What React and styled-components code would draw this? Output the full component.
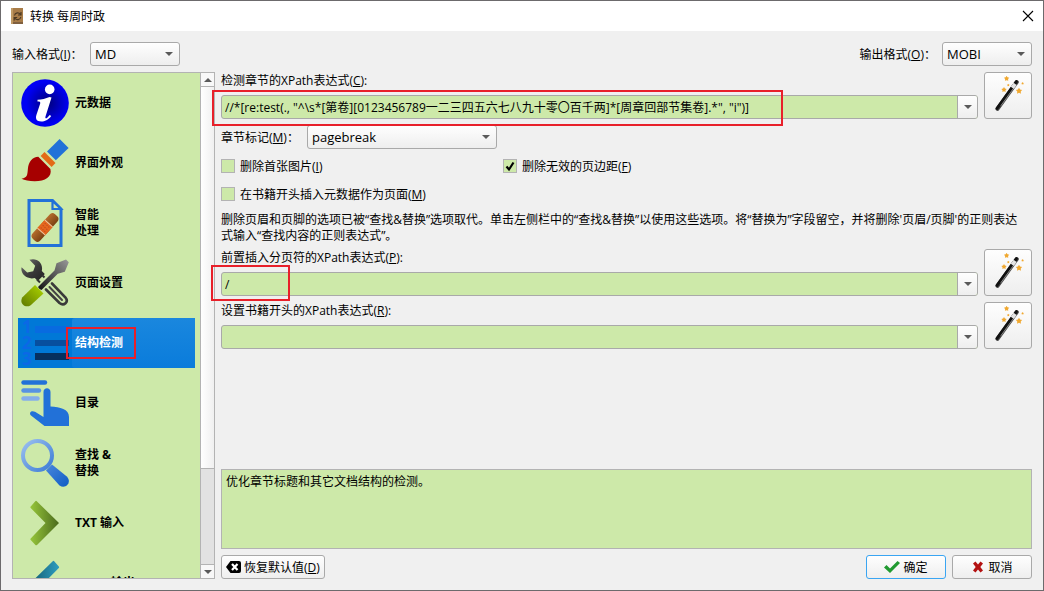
import React from 'react';
import styled, { createGlobalStyle, css } from 'styled-components';

const GREEN = '#cde9a9';
const EDGE = '#b3b3b3';

const GlobalStyle = createGlobalStyle`
  *, *::before, *::after { box-sizing: border-box; }
  body { margin: 0; }
  body, button, input, select, textarea {
    font-family: "Open Sans", "Noto Sans CJK SC", sans-serif;
    font-size: 12px;
    line-height: 16px;
    color: #000;
  }
  svg { display: block; flex: none; }
`;

const Dialog = styled.main`
  display: flex;
  flex-direction: column;
  height: 100vh;
  min-height: 480px;
  overflow: hidden;
  background: #f0f0f0;
  border: 1px solid #6c6a6c;
`;

/* Optical centring: CJK glyphs sit high in the line box. */
const centred = css`
  margin: 1px 0 -1px;
`;

const TitleBar = styled.header`
  display: flex;
  align-items: center;
  gap: 5px;
  height: 30px;
  flex: none;
  padding: 0 7px 0 8px;
  background: #fff;
`;

const Title = styled.h1`
  ${centred}
  flex: 1;
  font-size: 12px;
  font-weight: 400;
`;

const CloseButton = styled.button`
  display: flex;
  padding: 0;
  border: 0;
  background: none;
`;

const Body = styled.div`
  flex: 1;
  min-height: 0;
  display: flex;
  flex-direction: column;
  gap: 6px;
  padding: 11px;
`;

const Row = styled.div`
  display: flex;
  align-items: center;
  justify-content: ${(p) => (p.$spread ? 'space-between' : 'flex-start')};
  gap: 6px;
  flex: none;
`;

const Label = styled.label`
  ${centred}
  white-space: nowrap;
  min-width: ${(p) => (p.$wide ? '80px' : '72px')};
`;

const Caption = styled.span`
  ${centred}
`;

const SelectBox = styled.div`
  position: relative;
  width: ${(p) => (p.$wide ? '190px' : '90px')};
`;

const raised = css`
  border: 1px solid #a9a9a9;
  border-radius: 3px;
  background: linear-gradient(#fefefe, #eeeeee);
`;

const Select = styled.select`
  ${raised}
  appearance: none;
  display: block;
  width: 100%;
  height: 24px;
  padding: 0 20px 0 4px;
  font-size: 13px;
`;

const SelectArrow = styled.span`
  position: absolute;
  right: 7px;
  top: 10px;
  pointer-events: none;
`;

const Columns = styled.div`
  flex: 1;
  min-height: 0;
  display: flex;
  gap: 6px;
`;

const Sidebar = styled.div`
  display: flex;
  flex: none;
  width: 203px;
  border: 1px solid ${EDGE};
  background: ${GREEN};
`;

const NavList = styled.nav`
  flex: 1;
  min-width: 0;
  display: flex;
  flex-direction: column;
  gap: 10px;
  padding: 5px;
  overflow: hidden;
`;

const NavItem = styled.button`
  position: relative;
  display: flex;
  align-items: center;
  flex: none;
  height: 50px;
  padding: 0 0 0 3px;
  border: 0;
  text-align: left;
  font-weight: 700;
  white-space: pre-line;
  color: ${(p) => (p.$selected ? '#fff' : '#000')};
  background: ${(p) => (p.$selected ? '#0078d7' : 'transparent')};
`;

const NavText = styled.span`
  display: flex;
  align-items: center;
  flex: 1;
  align-self: stretch;
  margin-left: 3px;
  padding-left: 3px;
  border-radius: 3px 0 0 3px;
  background: ${(p) => (p.$selected ? 'linear-gradient(#1a87de, #0a7cdb)' : 'none')};
`;

const ScrollBar = styled.div`
  display: flex;
  flex-direction: column;
  width: 14px;
  border-left: 1px solid ${EDGE};
  background: #e2e2e2;
`;

const ScrollButton = styled.button`
  display: flex;
  align-items: center;
  justify-content: center;
  height: 14px;
  flex: none;
  padding: 0;
  border: 0 solid ${EDGE};
  border-width: ${(p) => (p.$end ? '1px 0 0' : '0 0 1px')};
  background: #f8f8f8;
`;

const ScrollThumb = styled.div`
  flex: 4;
  border-bottom: 1px solid ${EDGE};
  background: linear-gradient(90deg, #fff, #f0f0f0);
`;

const ScrollTrack = styled.div`
  flex: 1;
`;

const Panel = styled.section`
  flex: 1;
  min-width: 0;
  display: flex;
  flex-direction: column;
  gap: 6px;
`;

const Field = styled.div`
  display: flex;
  gap: 6px;
  flex: none;
`;

const FieldMain = styled.div`
  flex: 1;
  min-width: 0;
  display: flex;
  flex-direction: column;
  justify-content: space-between;
`;

const Combo = styled.div`
  position: relative;
  display: flex;
  height: 24px;
  border: 1px solid #a9a9a9;
  border-radius: 3px;
  background: ${GREEN};
`;

const ComboInput = styled.input`
  flex: 1;
  min-width: 0;
  padding: 2px 3px 0;
  border: 0;
  background: transparent;
`;

const ComboButton = styled.button`
  display: flex;
  align-items: center;
  justify-content: center;
  width: 20px;
  padding: 0;
  border: 0;
  border-left: 1px solid #a9a9a9;
  border-radius: 0 2px 2px 0;
  background: linear-gradient(#fefefe, #eeeeee);
`;

const WizardButton = styled.button`
  ${raised}
  display: flex;
  align-items: center;
  justify-content: center;
  width: 48px;
  height: 47px;
  padding: 0;
`;

const MARKS = {
  nav: css`left: 48px; top: 9px; width: 70px; height: 32px;`,
  long: css`left: -10px; top: -6px; width: 571px; height: 36px;`,
  short: css`left: -11px; top: -8px; width: 79px; height: 36px;`,
};

const Mark = styled.span`
  position: absolute;
  z-index: 1;
  border: 2px solid #e8202a;
  pointer-events: none;
  ${(p) => MARKS[p.$on]}
`;

const Checks = styled.div`
  display: grid;
  grid-template-columns: 276px 1fr;
  gap: 6px;
  flex: none;
`;

const CheckLabel = styled.label`
  display: flex;
  align-items: center;
  gap: 5px;
  height: 22px;
  white-space: nowrap;
`;

const CheckBox = styled.span`
  display: grid;
  width: 14px;
  height: 14px;

  > * { grid-area: 1 / 1; }
  svg { visibility: hidden; pointer-events: none; }
  input:checked + svg { visibility: visible; }
`;

const CheckInput = styled.input`
  appearance: none;
  width: 14px;
  height: 14px;
  margin: 0;
  border: 1px solid ${EDGE};
  background: ${GREEN};
`;

const Note = styled.p`
  ${centred}
  flex: none;
  padding-right: 6px;
`;

const Help = styled.textarea`
  display: block;
  width: 100%;
  height: 80px;
  flex: none;
  margin-top: auto;
  padding: 4px;
  border: 1px solid ${EDGE};
  background: ${GREEN};
  resize: none;
`;

const Button = styled.button`
  ${raised}
  display: flex;
  align-items: center;
  justify-content: center;
  gap: 3px;
  height: 24px;
  min-width: 80px;
  padding: 0 4px;
  border-color: ${(p) => (p.$primary ? '#3aa5f2' : '#a9a9a9')};
`;

const Arrow = ({ up }) => (
  <svg width="8" height="4" viewBox="0 0 8 4" aria-hidden="true">
    <path d={up ? 'M0 4 4 0 8 4z' : 'M0 0H8L4 4z'} fill="#5a5a5a" />
  </svg>
);

const star = (x, y, r) => {
  const pts = [];
  for (let i = 0; i < 10; i++) {
    const rad = i % 2 ? r * 0.55 : r;
    const a = -Math.PI / 2 + (i * Math.PI) / 5;
    pts.push(`${x + rad * Math.cos(a)},${y + rad * Math.sin(a)}`);
  }
  return <polygon points={pts.join(' ')} fill="#f0a830" />;
};

const Wand = () => (
  <svg width="40" height="40" viewBox="0 0 40 40" aria-hidden="true">
    <g strokeLinecap="round">
      <path d="M9.500 32.800 28.800 6" stroke="#444" strokeWidth="4" />
      <path d="M9 32.400 28.400 5.600" stroke="#111" strokeWidth="2.800" />
      <path d="m13 29.500 12-16.500" stroke="#999" strokeWidth="0.800" />
    </g>
    <path d="m24.300 11.800 2.800-3.900" stroke="#e4e4e4" strokeWidth="3.800" />
    {star(18.600, 2.600, 2.800)}
    {star(16, 13.800, 2.800)}
    {star(31, 15, 3.300)}
    {star(20.300, 9.200, 1.400)}
    {star(34.600, 7.400, 1.400)}
  </svg>
);

const Icon = ({ children }) => (
  <svg width="48" height="48" viewBox="0 0 48 48" aria-hidden="true">{children}</svg>
);

const InfoIcon = () => (
  <Icon>
    <defs>
      <radialGradient id="info" cx=".55" cy=".5" r=".5">
        <stop offset="0" stopColor="#00007a" />
        <stop offset=".9" stopColor="#0000f4" />
      </radialGradient>
    </defs>
    <circle cx="24" cy="24" r="23.800" fill="url(#info)" />
    <circle cx="28.700" cy="10.400" r="4.800" fill="#fff" />
    <path d="M16.500 20.800c4.300-.3 8.200-1.200 12-2.800l2 .6-6 19c-.6 2 .6 2.300 2 .9l2.200-2.400 1.500 1c-3 4.300-6.800 5.600-10 5.500-4.600 0-6-2.800-4.800-6.500l3.800-11.600c.5-1.600-.7-1.900-2.700-1.900z" fill="#fff" />
  </Icon>
);

const BrushIcon = () => (
  <Icon>
    <path d="M38.600 0 47.600 9 34.800 21.200 26 12.500z" fill="#2271d8" />
    <path d="m23.500 13 11 11-3.900 4.100-11-11z" fill="#e36a17" />
    <path d="M17.300 17.800 29.400 30c2 7.800-5.200 12.200-15.700 12.200-5.600 0-10.200-1-13.200-2.500 6-1.300 5.800-3.600 6.400-10C7.500 23 11.400 18 17.300 17.800z" fill="#a60000" />
  </Icon>
);

const BandageIcon = () => (
  <Icon>
    <defs>
      <linearGradient id="bandage" x1="0" x2="1">
        <stop offset="0" stopColor="#b56c2c" /><stop offset="1" stopColor="#7c4214" />
      </linearGradient>
    </defs>
    <path d="M8 1.500H31.500L40 10V46.500H8z" fill="none" stroke="#2271d8" strokeWidth="3" />
    <path d="M31.500 2v8H40z" fill="#cde9a9" stroke="#2271d8" strokeWidth="2.200" />
    <g transform="rotate(42 24 28.500)">
      <rect x="18.700" y="12" width="10.600" height="33" rx="4" fill="url(#bandage)" />
      <path d="M18.700 23H29.300V34H18.700z" fill="#e4671d" />
      <path d="M18.700 23H29.300M18.700 34H29.300" stroke="#f0c8a0" strokeWidth="1" />
      <path d="M21.500 25v8M24 25v8M26.500 25v8" stroke="#b83d20" strokeDasharray="1 2" />
    </g>
  </Icon>
);

const ToolsIcon = () => (
  <Icon>
    <defs>
      <linearGradient id="steel" x1="0" y1="0" x2="1" y2="1">
        <stop offset="0" stopColor="#777" /><stop offset=".5" stopColor="#3a3a3a" /><stop offset="1" stopColor="#222" />
      </linearGradient>
      <linearGradient id="grip" x1="0" y1="1" x2="1" y2="0">
        <stop offset="0" stopColor="#5e7800" /><stop offset="1" stopColor="#b0d800" />
      </linearGradient>
      <linearGradient id="blade" x1="0" y1="1" x2="1" y2="0">
        <stop offset="0" stopColor="#111" /><stop offset="1" stopColor="#999" />
      </linearGradient>
    </defs>
    <path d="M8.500.8C16-1.600 22.500 4 20.800 12l3 3-7 7-3-3C6.300 21-1 15 .6 8.200l5.600 5.300 6-1.300 2-5.400z" fill="url(#steel)" />
    <path d="m16 20.500 3 3M21 16l2.500 2.500" stroke="#333" strokeWidth="2" />
    <path d="M31 24.500 44.500 38.500c3.500 4.500-1.500 9-6 5.500L25 30.500" fill="none" stroke="#3a3a3a" strokeWidth="2.600" strokeLinecap="round" />
    <path d="M28.500 28 41 41" stroke="#444" strokeWidth="2" strokeLinecap="round" />
    <path d="M18.500 30 17 28 33.500 11.500l2-7.300L45 .5l2.800 2.800-4 9.500-7 2L20.500 31z" fill="url(#blade)" />
    <path d="m14 26 8.500 8.600L9.700 46.200C4.500 49.800-2 44.500 1.200 38.500z" fill="url(#grip)" />
  </Icon>
);

const StructureIcon = () => (
  <Icon>
    <g fill="#0c68e6" fontFamily="Open Sans" fontWeight="700" fontSize="17">
      <text x="1" y="14">1</text>
      <text x="1" y="30">2</text>
      <text x="1" y="46">3</text>
    </g>
    <path d="M14 7H48v7H14z" fill="#086be0" />
    <path d="M14 21H48v6H14z" fill="#074f9f" />
    <path d="M14 34H48v7H14z" fill="#06305f" />
  </Icon>
);

const TocIcon = () => (
  <Icon>
    <g strokeWidth="4.400" strokeLinecap="round">
      <path d="M2.500 3.500H24" stroke="#2271d8" />
      <path d="M2.500 11.500H18" stroke="#5793e2" />
      <path d="M2.500 19.500H16.500" stroke="#85aeea" />
    </g>
    <path d="M22.500 38V13c0-5 7-5 7 0v14.500c9.500.8 18.500 2.500 18.500 10.500v9H23.500L10 36.500c-2.500-3 .5-5.500 4-3.800z" fill="#2271d8" />
  </Icon>
);

const SearchIcon = () => (
  <Icon>
    <defs>
      <linearGradient id="lens" x1="0" y1="0" x2="1" y2="1">
        <stop offset="0" stopColor="#9bc0ef" /><stop offset="1" stopColor="#3c7cd6" />
      </linearGradient>
      <linearGradient id="handle" x1="0" y1="0" x2="1" y2="1">
        <stop offset="0" stopColor="#4a87dc" /><stop offset="1" stopColor="#0e5cc4" />
      </linearGradient>
    </defs>
    <path d="m31 25.500 14.500 11.700c6 5.500-.5 13.500-7 9.300L25 31.500z" fill="url(#handle)" />
    <circle cx="16.500" cy="16.500" r="14.500" fill="none" stroke="url(#lens)" strokeWidth="4" />
  </Icon>
);

const RightIcon = () => (
  <Icon>
    <defs>
      <linearGradient id="chevron"><stop offset="0" stopColor="#96c53a" /><stop offset="1" stopColor="#4a6a1d" /></linearGradient>
    </defs>
    <path d="M15.500 2 38 24 16 46q-1 .6-1.600 0l-4.700-5q-.6-1 0-1.500L24.500 24 9.700 9q-.6-1 0-1.500l4.600-5.300q.6-.7 1.200-.2z" fill="url(#chevron)" />
  </Icon>
);

const LeftIcon = () => (
  <Icon>
    <defs>
      <linearGradient id="back"><stop offset="0" stopColor="#145c70" /><stop offset="1" stopColor="#2d9dc0" /></linearGradient>
    </defs>
    <path d="M32 2 9.500 24 31.500 46q1 .6 1.600 0l4.700-5q.6-1 0-1.500L23 24 37.800 9q.6-1 0-1.500l-4.600-5.300q-.6-.7-1.200-.2z" fill="url(#back)" />
  </Icon>
);

const NAV = [
  ['元数据', InfoIcon],
  ['界面外观', BrushIcon],
  ['智能\n处理', BandageIcon],
  ['页面设置', ToolsIcon],
  ['结构检测', StructureIcon],
  ['目录', TocIcon],
  ['查找 &\n替换', SearchIcon],
  ['TXT 输入', RightIcon],
  ['MOBI 输出', LeftIcon],
];

const DropDown = ({ id, value, wide }) => (
  <SelectBox $wide={wide}>
    <Select id={id} defaultValue={value}>
      <option>{value}</option>
    </Select>
    <SelectArrow><Arrow /></SelectArrow>
  </SelectBox>
);

const XPathField = ({ id, label, hotkey, value, mark }) => (
  <Field>
    <FieldMain>
      <Label htmlFor={id}>{label}(<u>{hotkey}</u>):</Label>
      <Combo>
        <ComboInput id={id} type="text" defaultValue={value} />
        <ComboButton type="button" aria-label="历史记录"><Arrow /></ComboButton>
        {mark && <Mark $on={mark} />}
      </Combo>
    </FieldMain>
    <WizardButton type="button" aria-label="XPath 向导"><Wand /></WizardButton>
  </Field>
);

const Check = ({ label, hotkey, checked }) => (
  <CheckLabel>
    <CheckBox>
      <CheckInput type="checkbox" defaultChecked={checked} />
      <svg width="14" height="14" viewBox="0 0 14 14" aria-hidden="true">
        <path d="M3.500 7.500 6 10.500 10.500 3.500" fill="none" stroke="#000" strokeWidth="2.200" />
      </svg>
    </CheckBox>
    <Caption>{label}(<u>{hotkey}</u>)</Caption>
  </CheckLabel>
);

export default function App() {
  return (
    <Dialog lang="zh-CN">
      <GlobalStyle />
      <TitleBar>
        <svg width="16" height="16" viewBox="0 0 16 16" aria-hidden="true">
          <path d="M2 0H14V16H2z" fill="#a87c48" />
          <path d="M2 0H4V16H2z" fill="#c09a64" />
          <path d="M4 14H14V16H4z" fill="#806040" />
          <path d="M5.500 7.500C6 4.500 10 4 11.500 6.500M12 4v3H9M11.800 9c-.5 3-4.500 3.500-6 1M5.200 12.500v-3h3" fill="none" stroke="#4c3923" strokeWidth="1.200" />
        </svg>
        <Title>转换 每周时政</Title>
        <CloseButton type="button" aria-label="关闭">
          <svg width="16" height="16" viewBox="0 0 16 16"><path d="m3 3 10 10M13 3 3 13" stroke="#000" strokeWidth="1.100" /></svg>
        </CloseButton>
      </TitleBar>
      <Body>
        <Row $spread>
          <Row>
            <Label htmlFor="in">输入格式(<u>I</u>)：</Label>
            <DropDown id="in" value="MD" />
          </Row>
          <Row>
            <Label htmlFor="out">输出格式(<u>O</u>)：</Label>
            <DropDown id="out" value="MOBI" />
          </Row>
        </Row>
        <Columns>
          <Sidebar>
            <NavList>
              {NAV.map(([text, Picture]) => {
                const selected = text === '结构检测';
                return (
                  <NavItem key={text} type="button" $selected={selected}>
                    <Picture />
                    <NavText $selected={selected}>{text}</NavText>
                    {selected && <Mark $on="nav" />}
                  </NavItem>
                );
              })}
            </NavList>
            <ScrollBar>
              <ScrollButton type="button" aria-label="向上"><Arrow up /></ScrollButton>
              <ScrollThumb />
              <ScrollTrack />
              <ScrollButton type="button" aria-label="向下" $end><Arrow /></ScrollButton>
            </ScrollBar>
          </Sidebar>
          <Panel>
            <XPathField
              id="chapter"
              label="检测章节的XPath表达式"
              hotkey="C"
              value={'//*[re:test(., "^\\s*[第卷][0123456789一二三四五六七八九十零〇百千两]*[周章回部节集卷].*", "i")]'}
              mark="long"
            />
            <Row>
              <Label $wide htmlFor="mark">章节标记(<u>M</u>)：</Label>
              <DropDown id="mark" value="pagebreak" wide />
            </Row>
            <Checks>
              <Check label="删除首张图片" hotkey="I" />
              <Check label="删除无效的页边距" hotkey="F" checked />
              <Check label="在书籍开头插入元数据作为页面" hotkey="M" />
            </Checks>
            <Note>
              删除页眉和页脚的选项已被“查找&amp;替换”选项取代。单击左侧栏中的“查找&amp;替换”以使用这些选项。将“替换为”字段留空，并将删除'页眉/页脚'的正则表达式输入“查找内容的正则表达式”。
            </Note>
            <XPathField id="breaks" label="前置插入分页符的XPath表达式" hotkey="P" value="/" mark="short" />
            <XPathField id="start" label="设置书籍开头的XPath表达式" hotkey="R" value="" />
            <Help readOnly aria-label="说明" defaultValue="优化章节标题和其它文档结构的检测。" />
            <Row $spread>
              <Button type="button">
                <svg width="15" height="12" viewBox="0 0 15 12" aria-hidden="true">
                  <path d="M4.500 0H13q2 0 2 2v8q0 2-2 2H4.500L0 6z" fill="#000" />
                  <path d="m6 3 5.500 6M11.500 3 6 9" stroke="#fff" strokeWidth="2.200" />
                </svg>
                <Caption>恢复默认值(<u>D</u>)</Caption>
              </Button>
              <Row>
                <Button type="button" $primary>
                  <svg width="16" height="14" viewBox="0 0 16 14" aria-hidden="true">
                    <path d="M0 7.500 2.500 5 6 8.500 13.500 1 16 3 6 13z" fill="#219a31" />
                  </svg>
                  <Caption>确定</Caption>
                </Button>
                <Button type="button">
                  <svg width="14" height="14" viewBox="0 0 14 14" aria-hidden="true">
                    <path d="M2 3.500 4.500 1.500 7 4.500 9.500 1.500 12 3.500 9.300 7 12 10.500 9.500 12.500 7 9.500 4.500 12.500 2 10.500 4.700 7z" fill="#b31212" />
                  </svg>
                  <Caption>取消</Caption>
                </Button>
              </Row>
            </Row>
          </Panel>
        </Columns>
      </Body>
    </Dialog>
  );
}
